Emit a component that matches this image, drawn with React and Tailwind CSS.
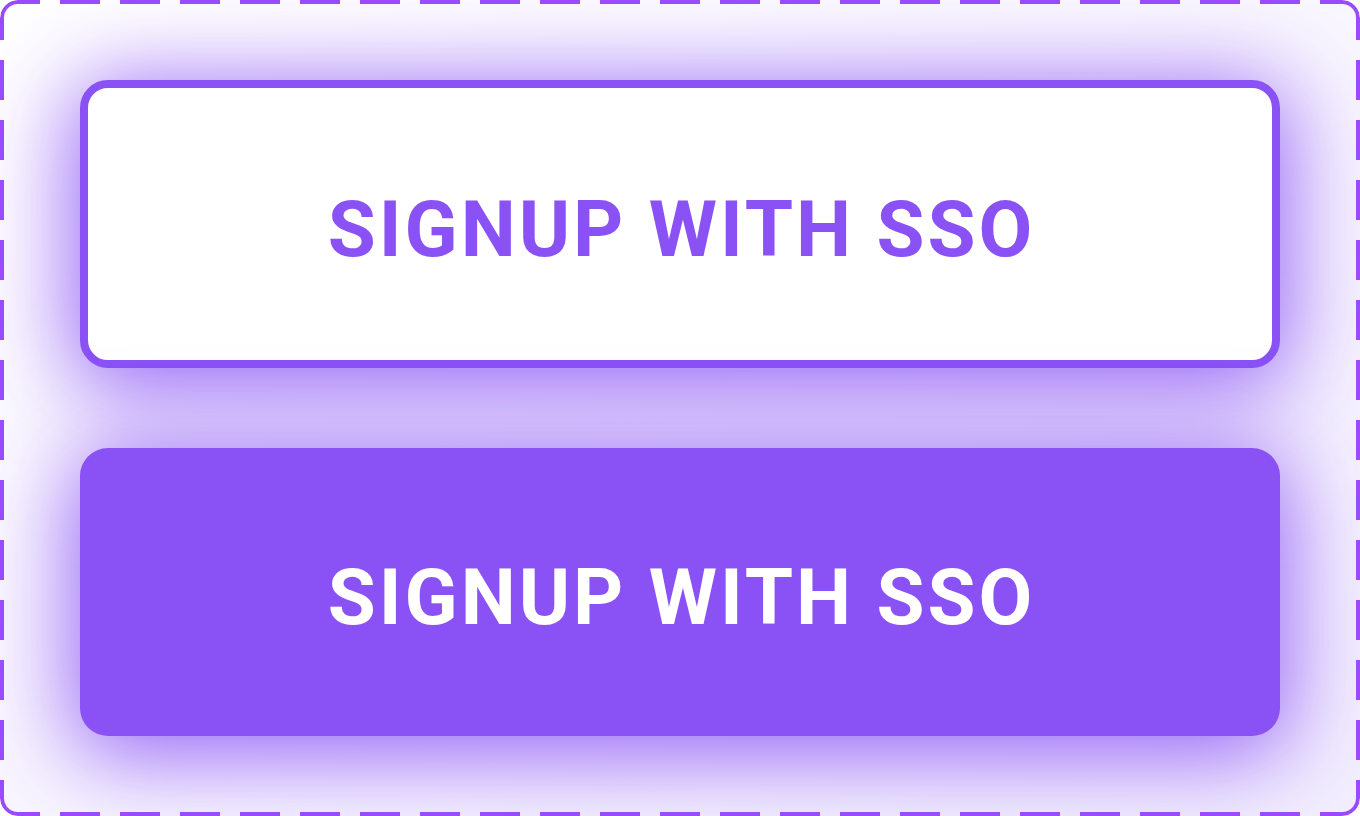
import React from 'react';

const SsoButton = ({ filled }) => (
  <button
    type="button"
    className={
      filled
        ? 'h-[288px] w-full shrink-0 flex items-center justify-center rounded-[28px] bg-[#8a52f5] text-white shadow-[0_12px_90px_8px_rgba(138,82,245,0.9)]'
        : 'h-[288px] w-full shrink-0 flex items-center justify-center rounded-[28px] border-8 border-[#8a52f5] bg-white text-[#8a52f5] shadow-[0_12px_90px_8px_rgba(138,82,245,0.9)]'
    }
  >
    <span className="pl-[3px] pt-[12px] font-['Roboto',Arial,sans-serif] font-bold text-[78px] leading-none tracking-[3px]">
      SIGNUP WITH SSO
    </span>
  </button>
);

export default function App() {
  return (
    <div className="w-full h-screen">
      <div className="relative h-full w-full rounded-[18px] bg-gradient-to-br from-white to-[#f3effe] p-20 flex flex-col gap-20 overflow-hidden">
        <SsoButton />
        <SsoButton filled />
        {/* dashed frame, dashes aligned on a 60px grid */}
        <div className="pointer-events-none absolute inset-0 rounded-[18px] border-4 border-[#9a4bff] [mask-image:repeating-linear-gradient(90deg,#000_0_40px,transparent_40px_60px),repeating-linear-gradient(180deg,#000_0_40px,transparent_40px_60px)] [mask-composite:intersect]" />
      </div>
    </div>
  );
}
